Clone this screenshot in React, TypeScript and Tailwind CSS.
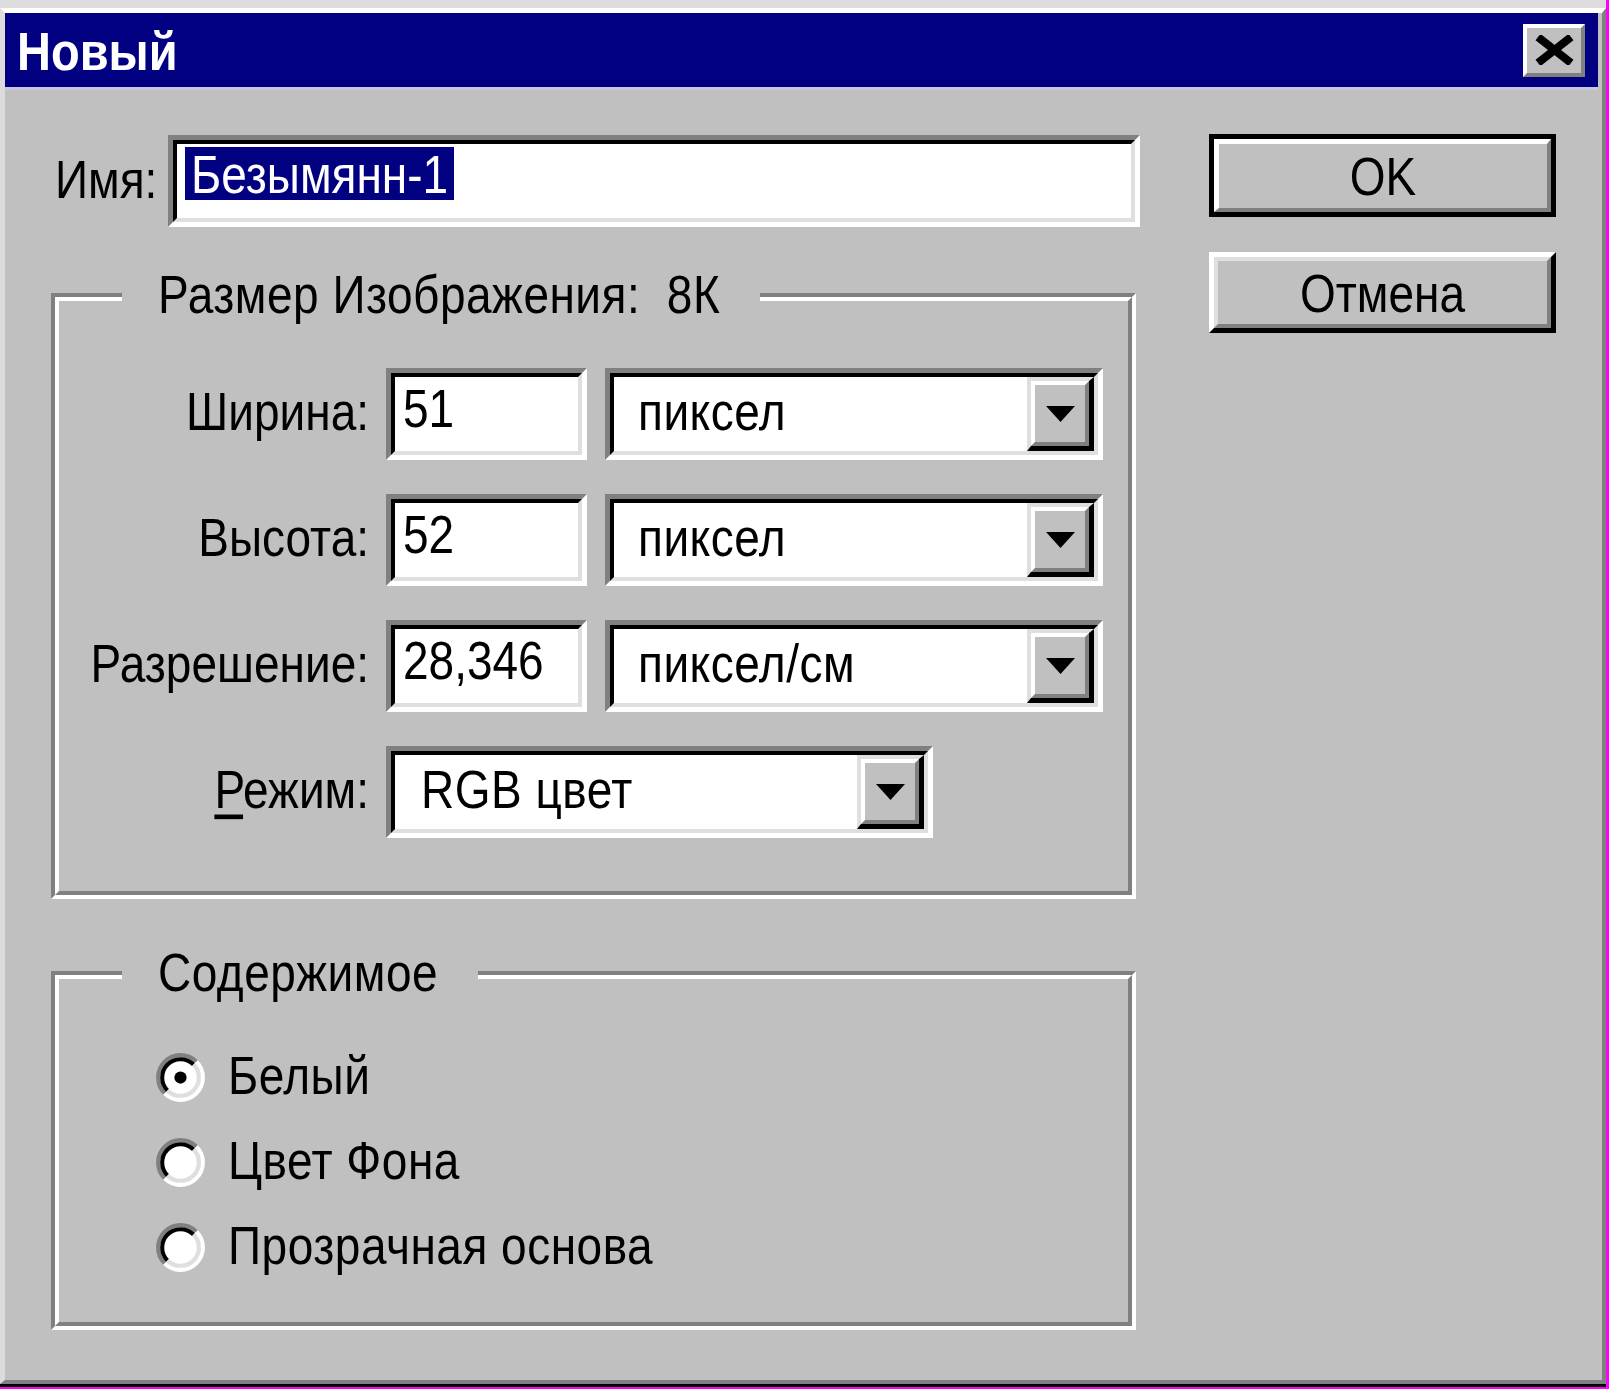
import React from "react";

function T({ children, className = "" }: { children: React.ReactNode; className?: string }) {
  return <span className={`inline-block scale-y-[1.16] ${className}`}>{children}</span>;
}

function Field({ className = "", children }: { className?: string; children?: React.ReactNode }) {
  return (
    <div className={`border-[5px] border-t-[#808080] border-l-[#808080] border-b-white border-r-white ${className}`}>
      <div className="h-full w-full border-4 border-t-black border-l-black border-b-[#dfdfdf] border-r-[#dfdfdf] bg-white flex items-center">
        {children}
      </div>
    </div>
  );
}

function DropBtn() {
  return (
    <div className="h-full w-[67px] border-t-4 border-l-4 border-t-[#dfdfdf] border-l-[#dfdfdf] border-b-[5px] border-r-[5px] border-b-black border-r-black">
      <div className="h-full w-full border-4 border-t-white border-l-white border-b-[#808080] border-r-[#808080] bg-[#c0c0c0] flex items-center justify-center">
        <svg width="29" height="16" viewBox="0 0 29 16">
          <polygon points="0,0 29,0 14.5,16" fill="#000" />
        </svg>
      </div>
    </div>
  );
}

function Combo({ className, text, pl }: { className: string; text: string; pl: string }) {
  return (
    <Field className={className}>
      <div className={`flex-1 ${pl} pb-[6px] text-[46px] leading-none text-black tracking-[0.5px]`}>
        <T>{text}</T>
      </div>
      <DropBtn />
    </Field>
  );
}

function Group({
  legend,
  className = "",
  children,
}: {
  legend: string;
  className?: string;
  children: React.ReactNode;
}) {
  return (
    <div
      className={`relative w-[1085px] border-4 border-t-[#808080] border-l-[#808080] border-b-white border-r-white ${className}`}
    >
      <div className="border-4 border-t-white border-l-white border-b-[#808080] border-r-[#808080]">{children}</div>
      <div className="absolute left-[67px] top-[-28px] h-[50px] flex items-center bg-[#c0c0c0] pl-[36px] pr-[40px] text-[46px] leading-none text-black whitespace-pre tracking-[0.5px]">
        <T>{legend}</T>
      </div>
    </div>
  );
}

function Radio({ checked }: { checked?: boolean }) {
  const c = 24;
  const arc = (r: number, tl: boolean) => {
    const d = r * 0.7071;
    const x1 = c - d;
    const y1 = c + d;
    const x2 = c + d;
    const y2 = c - d;
    return tl
      ? `M ${x1} ${y1} A ${r} ${r} 0 0 1 ${x2} ${y2}`
      : `M ${x2} ${y2} A ${r} ${r} 0 0 1 ${x1} ${y1}`;
  };
  return (
    <svg width="49" height="49" viewBox="0 0 48 48" className="shrink-0">
      <circle cx={c} cy={c} r="20" fill="#fff" />
      <path d={arc(22, true)} stroke="#808080" strokeWidth="4" fill="none" />
      <path d={arc(22, false)} stroke="#fff" strokeWidth="4" fill="none" />
      <path d={arc(18, true)} stroke="#000" strokeWidth="4" fill="none" />
      <path d={arc(18, false)} stroke="#dfdfdf" strokeWidth="4" fill="none" />
      {checked && <circle cx={c} cy={c} r="6" fill="#000" />}
    </svg>
  );
}

function Row({ label, children }: { label: React.ReactNode; children: React.ReactNode }) {
  return (
    <div className="flex items-center h-[92px]">
      <div className="w-[310px] text-right text-[46px] leading-none text-black pb-[6px]">
        <T>{label}</T>
      </div>
      <div className="ml-[17px] flex h-full">{children}</div>
    </div>
  );
}

function NumField({ value }: { value: string }) {
  return (
    <Field className="w-[201px] h-[92px]">
      <div className="pl-[8px] pb-[12px] text-[46px] leading-none text-black">
        <T>{value}</T>
      </div>
    </Field>
  );
}

export default function App() {
  return (
    <div className="w-[1609px] h-[1389px] bg-[#ff00ff] font-['Liberation_Sans',Arial,sans-serif]">
      <div className="w-[1606px] h-[1387px] flex flex-col border-t-[8px] border-t-[#dcdcdc] border-b-[3px] border-b-black bg-[#c0c0c0]">
        <div className="flex-1 flex flex-col border-t-[5px] border-t-white border-l-[5px] border-l-[#dcdcdc] border-r-[4px] border-r-[#808080] border-b-[4px] border-b-[#808080]">
          {/* Title bar */}
          <div className="h-[74px] mr-[4px] bg-[#000080] flex items-center justify-between pl-[12px] pr-[13px]">
            <div className="text-white font-bold text-[47px] leading-none">
              <T className="scale-y-[1.06]">Новый</T>
            </div>
            <div className="w-[62px] h-[53px] border-t-4 border-l-4 border-t-white border-l-white border-b-4 border-r-4 border-b-[#808080] border-r-[#808080] bg-[#c0c0c0] flex items-center justify-center">
              <svg width="41" height="30" viewBox="0 0 41 30">
                <line x1="4" y1="2" x2="37" y2="28" stroke="#000" strokeWidth="8" />
                <line x1="37" y1="2" x2="4" y2="28" stroke="#000" strokeWidth="8" />
              </svg>
            </div>
          </div>
          <div className="h-[3px] mr-[4px] bg-[#c8c8e4]" />

          {/* Body */}
          <div className="flex flex-row pt-[44px]">
            <div className="pl-[46px] flex flex-col">
              {/* Name row */}
              <div className="flex items-center mt-[1px]">
                <div className="ml-[4px] w-[113px] text-[46px] leading-none text-black pb-[4px]">
                  <T>Имя:</T>
                </div>
                <Field className="w-[972px] h-[92px]">
                  <div className="self-start mt-[3px] ml-[8px] h-[53px] bg-[#000080] flex items-center px-[6px] text-white text-[46px] leading-none">
                    <T>Безымянн-1</T>
                  </div>
                </Field>
              </div>

              {/* Group 1 */}
              <Group legend="Размер Изображения:  8К" className="mt-[66px]">
                <div className="pt-[67px] pb-[53px] flex flex-col gap-[34px]">
                  <Row label="Ширина:">
                    <NumField value="51" />
                    <Combo className="ml-[18px] w-[498px] h-[92px]" text="пиксел" pl="pl-[24px]" />
                  </Row>
                  <Row label="Высота:">
                    <NumField value="52" />
                    <Combo className="ml-[18px] w-[498px] h-[92px]" text="пиксел" pl="pl-[24px]" />
                  </Row>
                  <Row label="Разрешение:">
                    <NumField value="28,346" />
                    <Combo className="ml-[18px] w-[498px] h-[92px]" text="пиксел/см" pl="pl-[24px]" />
                  </Row>
                  <Row
                    label={
                      <>
                        <span className="underline decoration-[4px] underline-offset-[6px]">Р</span>ежим:
                      </>
                    }
                  >
                    <Combo className="w-[547px] h-[92px]" text="RGB цвет" pl="pl-[26px]" />
                  </Row>
                </div>
              </Group>

              {/* Group 2 */}
              <Group legend="Содержимое" className="mt-[72px]">
                <div className="pt-[68px] pb-[45px] flex flex-col gap-[25px]">
                  {[
                    { t: "Белый", c: true },
                    { t: "Цвет Фона", c: false },
                    { t: "Прозрачная основа", c: false },
                  ].map((r) => (
                    <div key={r.t} className="h-[60px] flex items-center pl-[97px]">
                      <Radio checked={r.c} />
                      <div className="ml-[23px] text-[46px] leading-none text-black pb-[4px] tracking-[0.5px]">
                        <T>{r.t}</T>
                      </div>
                    </div>
                  ))}
                </div>
              </Group>
            </div>

            {/* Buttons */}
            <div className="ml-[69px] flex flex-col">
              <div className="w-[347px] h-[83px] border-[5px] border-black">
                <div className="h-full w-full border-t-[5px] border-l-[5px] border-t-white border-l-white border-b-4 border-r-4 border-b-[#808080] border-r-[#808080] bg-[#c0c0c0] flex items-center justify-center text-[46px] leading-none text-black">
                  <T>OK</T>
                </div>
              </div>
              <div className="mt-[35px] w-[347px] h-[81px] border-t-[5px] border-l-[5px] border-t-white border-l-white border-b-[5px] border-r-[5px] border-b-black border-r-black">
                <div className="h-full w-full border-t-4 border-l-4 border-t-[#dfdfdf] border-l-[#dfdfdf] border-b-4 border-r-4 border-b-[#808080] border-r-[#808080] bg-[#c0c0c0] flex items-center justify-center text-[46px] leading-none text-black">
                  <T>Отмена</T>
                </div>
              </div>
            </div>
          </div>
        </div>
      </div>
    </div>
  );
}
